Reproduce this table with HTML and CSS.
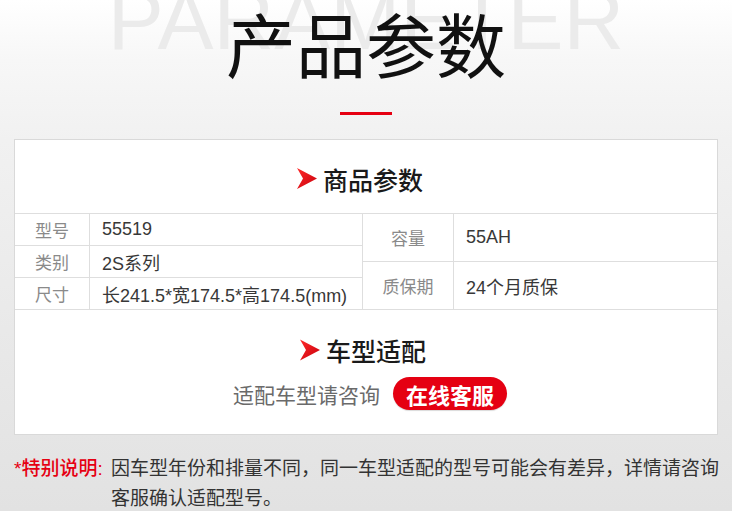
FILE: index.html
```html
<!DOCTYPE html>
<html lang="zh-CN">
<head>
<meta charset="utf-8">
<title>产品参数</title>
<link rel="stylesheet" href="styles.css">
</head>
<body>
<div class="page">
  <header class="hero">
    <div class="watermark">PARAMETER</div>
    <h1 class="title">产品参数</h1>
    <div class="rule"></div>
  </header>

  <section class="card">
    <div class="sec-head sec-head-top">
      <svg class="arrow" viewBox="0 0 20 21" width="20" height="21" aria-hidden="true">
        <defs>
          <linearGradient id="ag1" x1="0" y1="0" x2="1" y2="1">
            <stop offset="0" stop-color="#ff2a2a"/>
            <stop offset="1" stop-color="#c8000c"/>
          </linearGradient>
        </defs>
        <polygon points="0,0 20,10.5 0,21 6,10.5" fill="url(#ag1)"/>
      </svg>
      <span class="sec-title">商品参数</span>
    </div>

    <div class="specs">
      <div class="specs-col specs-left">
        <div class="row"><div class="lbl lbl-left">型号</div><div class="val">55519</div></div>
        <div class="row"><div class="lbl lbl-left">类别</div><div class="val">2S系列</div></div>
        <div class="row"><div class="lbl lbl-left">尺寸</div><div class="val">长241.5*宽174.5*高174.5(mm)</div></div>
      </div>
      <div class="specs-col specs-right">
        <div class="row row-tall"><div class="lbl lbl-right">容量</div><div class="val">55AH</div></div>
        <div class="row row-tall"><div class="lbl lbl-right">质保期</div><div class="val">24个月质保</div></div>
      </div>
    </div>

    <div class="fit">
      <div class="sec-head sec-head-fit">
        <svg class="arrow" viewBox="0 0 20 21" width="20" height="24" aria-hidden="true">
          <defs>
            <linearGradient id="ag2" x1="0" y1="0" x2="1" y2="1">
              <stop offset="0" stop-color="#ff2a2a"/>
              <stop offset="1" stop-color="#c8000c"/>
            </linearGradient>
          </defs>
          <polygon points="0,0 20,10.5 0,21 6,10.5" fill="url(#ag2)"/>
        </svg>
        <span class="sec-title">车型适配</span>
      </div>
      <div class="fit-line">
        <span class="fit-text">适配车型请咨询</span>
        <a class="btn" href="#">在线客服</a>
      </div>
    </div>
  </section>

  <div class="note">
    <span class="note-lbl">*特别说明:</span>
    <p class="note-text">因车型年份和排量不同，同一车型适配的型号可能会有差异，详情请咨询客服确认适配型号。</p>
  </div>
</div>
</body>
</html>
```

FILE: styles.css
```css
* { box-sizing: border-box; }

html, body {
  margin: 0;
  padding: 0;
}

body {
  width: 732px;
  height: 511px;
  overflow: hidden;
  background: linear-gradient(180deg, #ffffff 0px, #f7f7f7 60px, #f1f1f1 140px, #e9e9e9 330px, #e2e2e2 511px);
  font-family: "Liberation Sans", "Noto Sans CJK SC", sans-serif;
  color: #333;
}

.page {
  width: 732px;
}

/* ---------- hero ---------- */
.hero {
  position: relative;
  height: 139px;
  display: flex;
  flex-direction: column;
  align-items: center;
}

.watermark {
  position: absolute;
  left: 0;
  right: 0;
  top: -22px;
  text-align: center;
  font-family: "Liberation Sans", sans-serif;
  font-size: 84px;
  line-height: 1;
  color: #ebebeb;
  white-space: nowrap;
}

.title {
  position: relative;
  margin: 8px 0 0;
  font-family: "Noto Sans CJK SC", sans-serif;
  font-weight: 400;
  font-size: 70px;
  line-height: 70px;
  color: #111;
}

.rule {
  position: relative;
  margin-top: 34px;
  width: 52px;
  height: 3px;
  background: #e60012;
}

/* ---------- card ---------- */
.card {
  margin: 0 14px;
  background: #fff;
  border: 1px solid #d9d9d9;
}

.sec-head {
  display: flex;
  align-items: center;
  justify-content: center;
  gap: 6px;
}

.sec-head-top {
  height: 74px;
  padding: 4px 12px 0 0;
  border-bottom: 1px solid #dedede;
}

.sec-title {
  font-family: "Noto Sans CJK SC", sans-serif;
  font-weight: 500;
  font-size: 25px;
  line-height: 26px;
  color: #1a1a1a;
}

.arrow {
  display: block;
  flex: none;
}

/* specs table */
.specs {
  display: flex;
  border-bottom: 1px solid #dedede;
}

.specs-col {
  display: flex;
  flex-direction: column;
}

.specs-left {
  width: 348px;
  border-right: 1px solid #dedede;
}

.specs-right {
  flex: 1;
}

.row {
  display: flex;
  height: 32px;
  border-bottom: 1px solid #dedede;
}

.row:last-child {
  border-bottom: none;
  height: 31px;
}

.row-tall {
  height: 48px;
}

.row-tall:last-child {
  height: 47px;
}

.lbl {
  display: flex;
  align-items: center;
  justify-content: center;
  font-size: 17px;
  color: #8a8a8a;
  border-right: 1px solid #dedede;
  flex: none;
}

.lbl-left { width: 75px; }
.lbl-right { width: 91px; }

.val {
  display: flex;
  align-items: center;
  padding-left: 12px;
  font-size: 18px;
  color: #383838;
  white-space: nowrap;
}

/* fit section */
.fit {
  padding: 27px 0 24px;
}

.sec-head-fit {
  padding-right: 6px;
}

.fit-line {
  margin-top: 14px;
  display: flex;
  align-items: center;
  justify-content: center;
  gap: 13px;
  padding-left: 8px;
}

.fit-text {
  font-size: 21px;
  color: #6a6a6a;
}

.btn {
  display: flex;
  align-items: center;
  justify-content: center;
  width: 114px;
  height: 33px;
  border-radius: 17px;
  background: #e50012;
  color: #fff;
  font-family: "Noto Sans CJK SC", sans-serif;
  font-weight: 700;
  font-size: 22px;
  text-decoration: none;
  box-shadow: 0 1px 1px rgba(0,0,0,0.15);
}

/* note */
.note {
  display: flex;
  margin-top: 19px;
  padding: 0 12px 0 14px;
  font-size: 19px;
  line-height: 30px;
}

.note-lbl {
  flex: none;
  width: 97px;
  color: #e60012;
  font-weight: 500;
  white-space: nowrap;
}

.note-text {
  margin: 0;
  flex: 1;
  color: #333;
}
```
